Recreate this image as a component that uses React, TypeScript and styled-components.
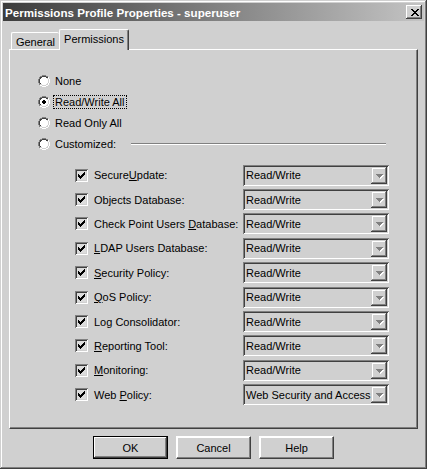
import styled, { createGlobalStyle } from 'styled-components';

const GlobalStyle = createGlobalStyle`
  html, body {
    margin: 0;
    padding: 0;
    background: #d0d0d0;
  }
  body {
    font-family: 'Liberation Sans', Arial, sans-serif;
    font-size: 11px;
    color: #000;
  }
`;

// classic 3d palette (grayscale)
const palette: Record<string, string> = {
  G: '#808080',
  K: '#404040',
  W: '#ffffff',
  L: '#d0d0d0',
  F: '#ffffff',
  X: '#000000',
};

const RADIO = [
  '....GGGG....',
  '..GGKKKKGG..',
  '.GKKFFFFKKW.',
  '.GKFFFFFFLW.',
  'GKFFFFFFFFLW',
  'GKFFFFFFFFLW',
  'GKFFFFFFFFLW',
  'GKFFFFFFFFLW',
  '.GKFFFFFFLW.',
  '.GLLFFFFLLW.',
  '..WWLLLLWW..',
  '....WWWW....',
];

const RADIO_ON = [
  '....GGGG....',
  '..GGKKKKGG..',
  '.GKKFFFFKKW.',
  '.GKFFFFFFLW.',
  'GKFFFXXFFFLW',
  'GKFFXXXXFFLW',
  'GKFFXXXXFFLW',
  'GKFFFXXFFFLW',
  '.GKFFFFFFLW.',
  '.GLLFFFFLLW.',
  '..WWLLLLWW..',
  '....WWWW....',
];

const CHECK = [
  '......X',
  '.....XX',
  'X...XXX',
  'XX.XXX.',
  'XXXXX..',
  '.XXX...',
  '..X....',
];

const CLOSE = [
  'XX....XX',
  '.XX..XX.',
  '..XXXX..',
  '...XX...',
  '..XXXX..',
  '.XX..XX.',
  'XX....XX',
];

const ARROW = [
  'GGGGGGG.',
  '.GGGGGWW',
  '..GGGWW.',
  '...GWW..',
  '....W...',
];

const PixelSvg = styled.svg`
  display: block;
  flex: none;
`;

const Pixels = ({ rows }: { rows: string[] }) => {
  const w = rows[0].length;
  const h = rows.length;
  const cells: React.ReactElement[] = [];
  rows.forEach((row, y) =>
    row.split('').forEach((c, x) => {
      if (c !== '.') {
        cells.push(<rect key={`${x}-${y}`} x={x} y={y} width={1} height={1} fill={palette[c]} />);
      }
    })
  );
  return (
    <PixelSvg width={w} height={h} viewBox={`0 0 ${w} ${h}`} shapeRendering="crispEdges">
      {cells}
    </PixelSvg>
  );
};

type Perm = { pre: string; key?: string; post?: string; value: string };

const perms: Perm[] = [
  { pre: 'Secure', key: 'U', post: 'pdate:', value: 'Read/Write' },
  { pre: 'Objects Database:', value: 'Read/Write' },
  { pre: 'Check Point Users ', key: 'D', post: 'atabase:', value: 'Read/Write' },
  { pre: '', key: 'L', post: 'DAP Users Database:', value: 'Read/Write' },
  { pre: '', key: 'S', post: 'ecurity Policy:', value: 'Read/Write' },
  { pre: '', key: 'Q', post: 'oS Policy:', value: 'Read/Write' },
  { pre: 'Log Consolidator:', value: 'Read/Write' },
  { pre: '', key: 'R', post: 'eporting Tool:', value: 'Read/Write' },
  { pre: '', key: 'M', post: 'onitoring:', value: 'Read/Write' },
  { pre: 'Web ', key: 'P', post: 'olicy:', value: 'Web Security and Access' },
];

const radios = ['None', 'Read/Write All', 'Read Only All', 'Customized:'];

const App = (): React.ReactElement => {
  return (
    <>
      <GlobalStyle />
      <Window>
        <TitleBar>
          <Title>Permissions Profile Properties - superuser</Title>
          <CloseButton>
            <Pixels rows={CLOSE} />
          </CloseButton>
        </TitleBar>
        <Client>
          <TabStrip>
            <Tab>General</Tab>
            <Tab $active>Permissions</Tab>
          </TabStrip>
          <Panel>
            <RadioList>
              {radios.map((r, i) => (
                <RadioRow key={r}>
                  <Pixels rows={i === 1 ? RADIO_ON : RADIO} />
                  <RadioLabel $focused={i === 1}>{r}</RadioLabel>
                  {i === 3 && <Separator />}
                </RadioRow>
              ))}
            </RadioList>
            <PermList>
              {perms.map(p => (
                <PermRow key={p.pre + (p.post ?? '')}>
                  <CheckBox>
                    <Pixels rows={CHECK} />
                  </CheckBox>
                  <PermLabel>
                    {p.pre}
                    {p.key && <u>{p.key}</u>}
                    {p.post}
                  </PermLabel>
                  <Combo>
                    <ComboText>{p.value}</ComboText>
                    <ComboButton>
                      <Pixels rows={ARROW} />
                    </ComboButton>
                  </Combo>
                </PermRow>
              ))}
            </PermList>
          </Panel>
          <ButtonRow>
            <Button $default>OK</Button>
            <Button>Cancel</Button>
            <Button>Help</Button>
          </ButtonRow>
        </Client>
      </Window>
    </>
  );
};

export default App;

const Window = styled.div`
  width: 427px;
  height: 469px;
  box-sizing: border-box;
  padding: 3px;
  background: #d0d0d0;
  box-shadow: inset -1px -1px #404040, inset 1px 1px #d0d0d0, inset -2px -2px #808080,
    inset 2px 2px #ffffff;
  display: flex;
  flex-direction: column;
`;

const TitleBar = styled.div`
  height: 18px;
  flex: none;
  margin-bottom: 1px;
  display: flex;
  align-items: center;
  justify-content: space-between;
  padding: 0 2px 0 2px;
  background: linear-gradient(to right, #3c3c3c, #c4c4c4);
`;

const Title = styled.span`
  color: #ffffff;
  font-weight: bold;
  font-size: 11.6px;
  white-space: nowrap;
`;

const CloseButton = styled.div`
  width: 16px;
  height: 14px;
  box-sizing: border-box;
  display: flex;
  align-items: center;
  justify-content: center;
  padding-left: 1px;
  background: #d0d0d0;
  box-shadow: inset -1px -1px #404040, inset 1px 1px #ffffff, inset -2px -2px #808080,
    inset 2px 2px #d0d0d0;
`;

const Client = styled.div`
  flex: 1;
  display: flex;
  flex-direction: column;
  padding: 7px 6px 7px 6px;
`;

const TabStrip = styled.div`
  height: 20px;
  flex: none;
  display: flex;
  align-items: flex-end;
  padding-left: 2px;
`;

const Tab = styled.div<{ $active?: boolean }>`
  position: relative;
  z-index: 1;
  box-sizing: border-box;
  height: ${p => (p.$active ? '21px' : '17px')};
  width: ${p => (p.$active ? '70px' : '48px')};
  margin-bottom: ${p => (p.$active ? '-1px' : '0')};
  padding-top: ${p => (p.$active ? '3px' : '3px')};
  text-align: center;
  background: #d0d0d0;
  border-top: 1px solid #ffffff;
  border-left: 1px solid #ffffff;
  border-right: ${p => (p.$active ? '1px solid #404040' : 'none')};
  border-top-left-radius: 2px;
  border-top-right-radius: 2px;
  box-shadow: ${p => (p.$active ? 'inset -1px 0 #808080' : 'none')};
`;

const Panel = styled.div`
  height: 380px;
  flex: none;
  box-sizing: border-box;
  border-top: 1px solid #ffffff;
  border-left: 1px solid #ffffff;
  border-right: 1px solid #404040;
  border-bottom: 1px solid #404040;
  box-shadow: inset -1px -1px #808080;
`;

const RadioList = styled.div`
  padding: 20px 0 0 28px;
  display: flex;
  flex-direction: column;
`;

const RadioRow = styled.div`
  height: 21px;
  display: flex;
  align-items: center;
  gap: 3px;
`;

const RadioLabel = styled.span<{ $focused?: boolean }>`
  padding: 0 1px;
  border: 1px ${p => (p.$focused ? 'dotted #000000' : 'solid transparent')};
  line-height: 11px;
  padding-top: 1px;
  white-space: nowrap;
`;

const Separator = styled.div`
  flex: 1;
  height: 0;
  border-top: 1px solid #808080;
  border-bottom: 1px solid #ffffff;
  margin: 1px 31px 0 10px;
`;

const PermList = styled.div`
  margin-top: 9px;
  padding-left: 65px;
  display: flex;
  flex-direction: column;
`;

const PermRow = styled.div`
  height: 24.4px;
  display: flex;
  align-items: center;
`;

const CheckBox = styled.div`
  width: 13px;
  height: 13px;
  flex: none;
  box-sizing: border-box;
  padding: 3px;
  margin-right: 6px;
  background: #dcdcdc;
  box-shadow: inset 1px 1px #808080, inset -1px -1px #ffffff, inset 2px 2px #404040,
    inset -2px -2px #d0d0d0;
`;

const PermLabel = styled.span`
  width: 149px;
  flex: none;
  white-space: nowrap;
`;

const Combo = styled.div`
  width: 146px;
  height: 21px;
  flex: none;
  box-sizing: border-box;
  padding: 2px;
  display: flex;
  align-items: center;
  background: #d0d0d0;
  box-shadow: inset 1px 1px #808080, inset -1px -1px #ffffff, inset 2px 2px #404040,
    inset -2px -2px #d0d0d0;
`;

const ComboText = styled.span`
  flex: 1;
  padding-left: 1px;
  overflow: hidden;
  white-space: nowrap;
`;

const ComboButton = styled.div`
  width: 16px;
  height: 17px;
  flex: none;
  box-sizing: border-box;
  display: flex;
  align-items: center;
  justify-content: center;
  padding: 2px 0 0 1px;
  background: #d0d0d0;
  box-shadow: inset -1px -1px #404040, inset 1px 1px #d0d0d0, inset -2px -2px #808080,
    inset 2px 2px #ffffff;
`;

const ButtonRow = styled.div`
  margin-top: 7px;
  display: flex;
  justify-content: center;
  gap: 8px;
`;

const Button = styled.div<{ $default?: boolean }>`
  width: 75px;
  height: 23px;
  box-sizing: border-box;
  display: flex;
  align-items: center;
  justify-content: center;
  background: #d0d0d0;
  border: 1px solid ${p => (p.$default ? '#000000' : 'transparent')};
  box-shadow: ${p =>
    p.$default
      ? 'inset -1px -1px #404040, inset 1px 1px #ffffff, inset -2px -2px #808080'
      : 'inset -1px -1px #808080, inset 1px 1px #ffffff'};
  ${p => (!p.$default ? 'border-color: #ffffff #404040 #404040 #ffffff;' : '')}
`;
